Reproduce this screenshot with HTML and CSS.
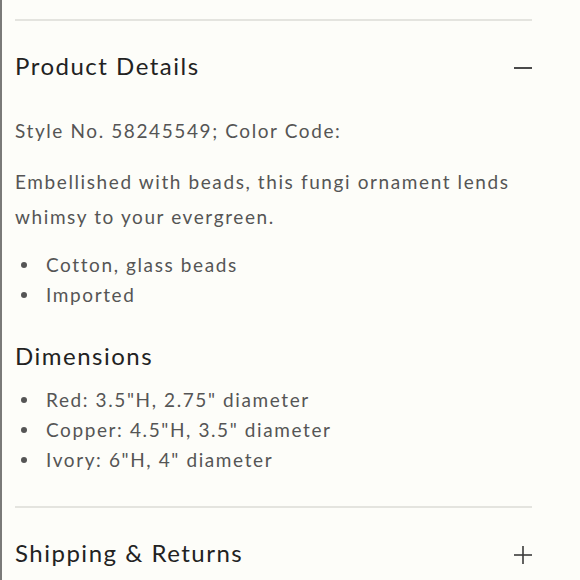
FILE: index.html
```html
<!DOCTYPE html>
<html lang="en">
<head>
<meta charset="utf-8">
<title>Product Details</title>
<link rel="stylesheet" href="styles.css">
</head>
<body>
<div class="page">
  <section class="acc acc-open">
    <div class="acc-head">
      <h2 class="acc-title">Product Details</h2>
      <svg class="acc-icon" width="18" height="18" viewBox="0 0 18 18" aria-hidden="true"><line x1="0" y1="9" x2="18" y2="9" stroke="#4a4a4a" stroke-width="2"/></svg>
    </div>
    <div class="acc-body">
      <p class="txt">Style No. 58245549; Color Code:</p>
      <p class="txt txt-desc">Embellished with beads, this fungi ornament lends whimsy to your evergreen.</p>
      <ul class="bullets">
        <li>Cotton, glass beads</li>
        <li>Imported</li>
      </ul>
      <h3 class="sub-title">Dimensions</h3>
      <ul class="bullets bullets-dim">
        <li>Red: 3.5"H, 2.75" diameter</li>
        <li>Copper: 4.5"H, 3.5" diameter</li>
        <li>Ivory: 6"H, 4" diameter</li>
      </ul>
    </div>
  </section>
  <section class="acc">
    <div class="acc-head">
      <h2 class="acc-title">Shipping &amp; Returns</h2>
      <svg class="acc-icon" width="18" height="18" viewBox="0 0 18 18" aria-hidden="true"><line x1="0" y1="9" x2="18" y2="9" stroke="#3a3a3a" stroke-width="1.6"/><line x1="9" y1="0" x2="9" y2="18" stroke="#3a3a3a" stroke-width="1.6"/></svg>
    </div>
  </section>
</div>
</body>
</html>
```
FILE: styles.css
```css
html, body {
  margin: 0;
  padding: 0;
  background: #fdfdf9;
}
.page {
  box-sizing: border-box;
  min-height: 580px;
  border-left: 2px solid #7a7a78;
  padding: 19px 48px 0 13px;
  font-family: Lato, "Liberation Sans", sans-serif;
  background: #fdfdf9;
}
.acc {
  border-top: 2px solid #e4e4df;
}
.acc-head {
  display: flex;
  align-items: center;
  justify-content: space-between;
  height: 92px;
}
.acc-title {
  margin: 0 0 4px;
  font-size: 24px;
  font-weight: 400;
  letter-spacing: 1.5px;
  color: #222;
}
.acc-icon {
  display: block;
  margin-top: 1px;
}
.acc-body {
  padding-bottom: 31px;
}
.txt {
  margin: 0;
  font-size: 19px;
  line-height: 35px;
  letter-spacing: 1.6px;
  color: #555;
}
.txt-desc {
  margin-top: 16px;
}
.bullets {
  list-style: none;
  margin: 16px 0 0;
  padding: 0;
}
.bullets li {
  display: flex;
  align-items: center;
  font-size: 19px;
  line-height: 30px;
  letter-spacing: 1.6px;
  color: #555;
}
.bullets li::before {
  content: "";
  width: 6px;
  height: 6px;
  border-radius: 50%;
  background: #555;
  margin: 0 19px 0 6px;
  flex: none;
}
.sub-title {
  margin: 26px 0 0;
  font-size: 24px;
  font-weight: 400;
  line-height: 40px;
  letter-spacing: 1.5px;
  color: #222;
}
.bullets-dim {
  margin-top: 9px;
}
```
